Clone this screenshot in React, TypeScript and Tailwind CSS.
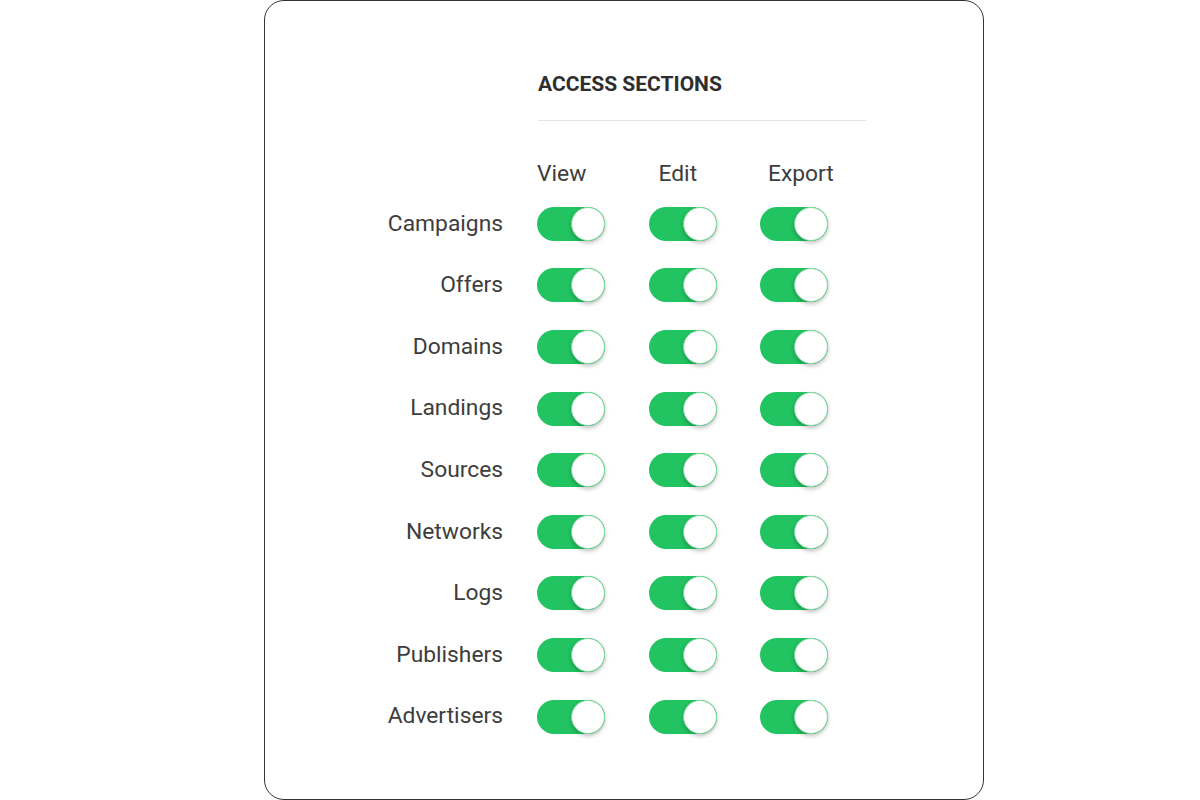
const sections = [
  "Campaigns",
  "Offers",
  "Domains",
  "Landings",
  "Sources",
  "Networks",
  "Logs",
  "Publishers",
  "Advertisers",
];

const Toggle = () => (
  <div className="relative h-[34px] w-[68px] shrink-0 rounded-full bg-[#22c462]">
    <div className="absolute right-0 top-0 h-[34px] w-[34px] rounded-full border border-[#7fd9a0] bg-white shadow-[0_2px_4px_rgba(0,0,0,0.25)]" />
  </div>
);

export default function App() {
  return (
    <div className="min-h-[800px] bg-white font-['Roboto',sans-serif]">
      <div className="ml-[264px] h-[800px] w-[720px] rounded-[20px] border-[1.5px] border-[#333333] bg-white">
        <div className="ml-[273px] w-[328px] pt-[71px]">
          <h2 className="text-[21px] font-bold leading-[24px] text-[#2e2e2e]">
            ACCESS SECTIONS
          </h2>
          <div className="mt-[24px] h-px bg-[#e3e3e3]" />
        </div>

        <div className="mt-[34px] flex h-[38px] items-center text-[22.8px] text-[#3d3d3d]">
          <div className="w-[272px] shrink-0" />
          <div className="flex gap-[43.5px]">
            <div className="w-[68px] whitespace-nowrap">View</div>
            <div className="w-[68px] whitespace-nowrap pl-[10px]">Edit</div>
            <div className="w-[68px] whitespace-nowrap pl-[8px]">Export</div>
          </div>
        </div>

        {sections.map((name) => (
          <div key={name} className="flex h-[61.6px] items-center">
            <div className="w-[238px] shrink-0 text-right text-[22.8px] text-[#3d3d3d]">
              {name}
            </div>
            <div className="ml-[34px] flex gap-[43.5px]">
              <Toggle />
              <Toggle />
              <Toggle />
            </div>
          </div>
        ))}
      </div>
    </div>
  );
}
